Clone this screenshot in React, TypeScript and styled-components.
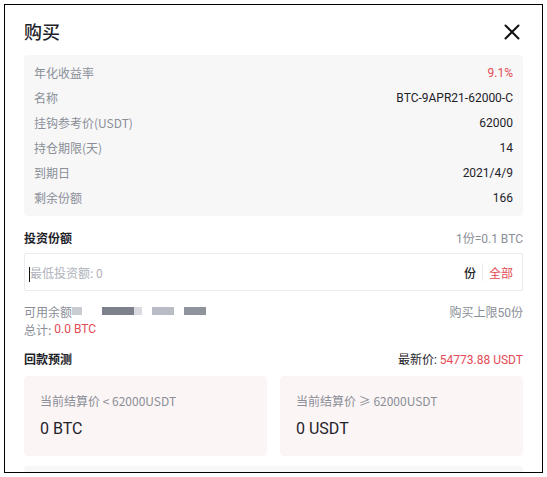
import React from "react";
import styled, { createGlobalStyle } from "styled-components";

const GlobalStyle = createGlobalStyle`
  html, body {
    margin: 0;
    padding: 0;
    background: #fff;
  }
  body {
    font-family: "Noto Sans CJK SC", "Noto Sans", sans-serif;
    color: #1e2329;
  }
`;

const infoRows = [
  { label: "年化收益率", value: "9.1%", red: true },
  { label: "名称", value: "BTC-9APR21-62000-C" },
  { label: "挂钩参考价(USDT)", value: "62000" },
  { label: "持仓期限(天)", value: "14" },
  { label: "到期日", value: "2021/4/9" },
  { label: "剩余份额", value: "166" },
];

function App() {
  return (
    <>
      <GlobalStyle />
      <S.Frame>
        <S.Header>
          <S.Title>购买</S.Title>
          <S.Close aria-label="close">
            <svg width="16" height="16" viewBox="0 0 16 16">
              <path d="M1.5 1.5 L14.5 14.5 M14.5 1.5 L1.5 14.5" stroke="#111" strokeWidth="2" strokeLinecap="round" />
            </svg>
          </S.Close>
        </S.Header>

        <S.InfoPanel>
          {infoRows.map((r) => (
            <S.InfoRow key={r.label}>
              <S.Label>{r.label}</S.Label>
              <S.Value red={r.red}>{r.value}</S.Value>
            </S.InfoRow>
          ))}
        </S.InfoPanel>

        <S.SectionHead>
          <S.SectionTitle>投资份额</S.SectionTitle>
          <S.Hint>1份=0.1 BTC</S.Hint>
        </S.SectionHead>

        <S.InputBox>
          <S.Caret />
          <S.Placeholder>最低投资额: 0</S.Placeholder>
          <S.Unit>份</S.Unit>
          <S.Divider />
          <S.All>全部</S.All>
        </S.InputBox>

        <S.MetaRow top={11}>
          <S.Balance>
            可用余额
            <S.Blur w={10} c="#c9ccd3" />
            <S.Gap w={20} />
            <S.Blur w={32} c="#7d818c" />
            <S.Blur w={8} c="#d9dbe0" />
            <S.Gap w={10} />
            <S.Blur w={22} c="#b9bcc4" />
            <S.Gap w={10} />
            <S.Blur w={22} c="#8f939c" />
          </S.Balance>
          <S.Hint>购买上限50份</S.Hint>
        </S.MetaRow>
        <S.MetaRow>
          <S.Balance>
            总计: <S.Red>&nbsp;0.0 BTC</S.Red>
          </S.Balance>
        </S.MetaRow>

        <S.SectionHead top={11}>
          <S.SectionTitle>回款预测</S.SectionTitle>
          <S.Price>
            最新价: <S.Red>54773.88 USDT</S.Red>
          </S.Price>
        </S.SectionHead>

        <S.Cards>
          <S.Card>
            <S.CardLabel>当前结算价 &lt; 62000USDT</S.CardLabel>
            <S.CardValue>0 BTC</S.CardValue>
          </S.Card>
          <S.Card>
            <S.CardLabel>当前结算价 ≥ 62000USDT</S.CardLabel>
            <S.CardValue>0 USDT</S.CardValue>
          </S.Card>
        </S.Cards>

        <S.BottomPanel />
      </S.Frame>
    </>
  );
}
export default App;

const Frame = styled.div`
  box-sizing: border-box;
  margin: 4px;
  width: 539px;
  height: 469px;
  border: 1px solid #000;
  padding: 0 19px;
  overflow: hidden;
  background: #fff;
`;

const Header = styled.div`
  height: 50px;
  display: flex;
  align-items: center;
  justify-content: space-between;
`;

const Title = styled.div`
  font-size: 18px;
  font-weight: 500;
  color: #1e2329;
  margin-top: 2px;
`;

const Close = styled.div`
  width: 16px;
  height: 16px;
  margin-right: 3px;
  margin-top: 3px;
  display: flex;
`;

const InfoPanel = styled.div`
  background: #f7f7f8;
  border-radius: 4px;
  padding: 5px 10px 6px;
`;

const InfoRow = styled.div`
  height: 25px;
  display: flex;
  align-items: center;
  justify-content: space-between;
  font-size: 12px;
`;

const Label = styled.span`
  color: #8a8e97;
`;

const Value = styled.span<{ red?: boolean }>`
  color: ${({ red }) => (red ? "#e34a55" : "#1e2329")};
  font-family: "Roboto", "Noto Sans CJK SC", sans-serif;
`;

const SectionHead = styled.div<{ top?: number }>`
  margin-top: ${({ top }) => (top ?? 12)}px;
  height: 18px;
  display: flex;
  align-items: center;
  justify-content: space-between;
`;

const SectionTitle = styled.span`
  font-size: 12px;
  font-weight: 700;
  color: #1e2329;
`;

const Hint = styled.span`
  font-size: 12px;
  color: #8a8e97;
  font-family: "Roboto", "Noto Sans CJK SC", sans-serif;
`;

const Price = styled.span`
  font-size: 12px;
  color: #1e2329;
  font-family: "Roboto", "Noto Sans CJK SC", sans-serif;
`;

const Red = styled.span`
  color: #e34a55;
  font-family: "Roboto", "Noto Sans CJK SC", sans-serif;
`;

const InputBox = styled.div`
  margin-top: 7px;
  box-sizing: border-box;
  height: 38px;
  border: 1px solid #eaecef;
  border-radius: 2px;
  display: flex;
  align-items: center;
  padding: 0 9px 0 4px;
  font-size: 12px;
`;

const Caret = styled.span`
  width: 1px;
  height: 15px;
  background: #111;
  margin-top: 4px;
`;

const Placeholder = styled.span`
  flex: 1;
  color: #aeb2ba;
`;

const Unit = styled.span`
  color: #1e2329;
  font-weight: 500;
`;

const Divider = styled.span`
  width: 1px;
  height: 18px;
  background: #eaecef;
  margin: 0 6px;
`;

const All = styled.span`
  color: #e34a55;
`;

const MetaRow = styled.div<{ top?: number }>`
  margin-top: ${({ top }) => (top ?? 0)}px;
  height: 18px;
  display: flex;
  align-items: center;
  justify-content: space-between;
`;

const Balance = styled.span`
  font-size: 12px;
  color: #8a8e97;
  display: flex;
  align-items: center;
`;

const Blur = styled.span<{ w: number; c: string }>`
  display: inline-block;
  width: ${({ w }) => w}px;
  height: 8px;
  background: ${({ c }) => c};
  filter: blur(0.6px);
`;

const Gap = styled.span<{ w: number }>`
  display: inline-block;
  width: ${({ w }) => w}px;
`;

const Cards = styled.div`
  margin-top: 9px;
  display: grid;
  grid-template-columns: 1fr 1fr;
  gap: 13px;
`;

const Card = styled.div`
  height: 80px;
  box-sizing: border-box;
  background: #fcf5f5;
  border-radius: 4px;
  padding: 16px 16px 0;
`;

const CardLabel = styled.div`
  font-size: 12px;
  color: #8a8e97;
  height: 18px;
  line-height: 18px;
`;

const CardValue = styled.div`
  margin-top: 8px;
  font-size: 16px;
  color: #1e2329;
  font-family: "Roboto", "Noto Sans CJK SC", sans-serif;
  height: 22px;
  line-height: 22px;
`;

const BottomPanel = styled.div`
  margin-top: 10px;
  height: 40px;
  background: #f7f7f8;
  border-radius: 4px;
`;

const S = {
  Frame,
  Header,
  Title,
  Close,
  InfoPanel,
  InfoRow,
  Label,
  Value,
  SectionHead,
  SectionTitle,
  Hint,
  Price,
  Red,
  InputBox,
  Caret,
  Placeholder,
  Unit,
  Divider,
  All,
  MetaRow,
  Balance,
  Blur,
  Gap,
  Cards,
  Card,
  CardLabel,
  CardValue,
  BottomPanel,
};
